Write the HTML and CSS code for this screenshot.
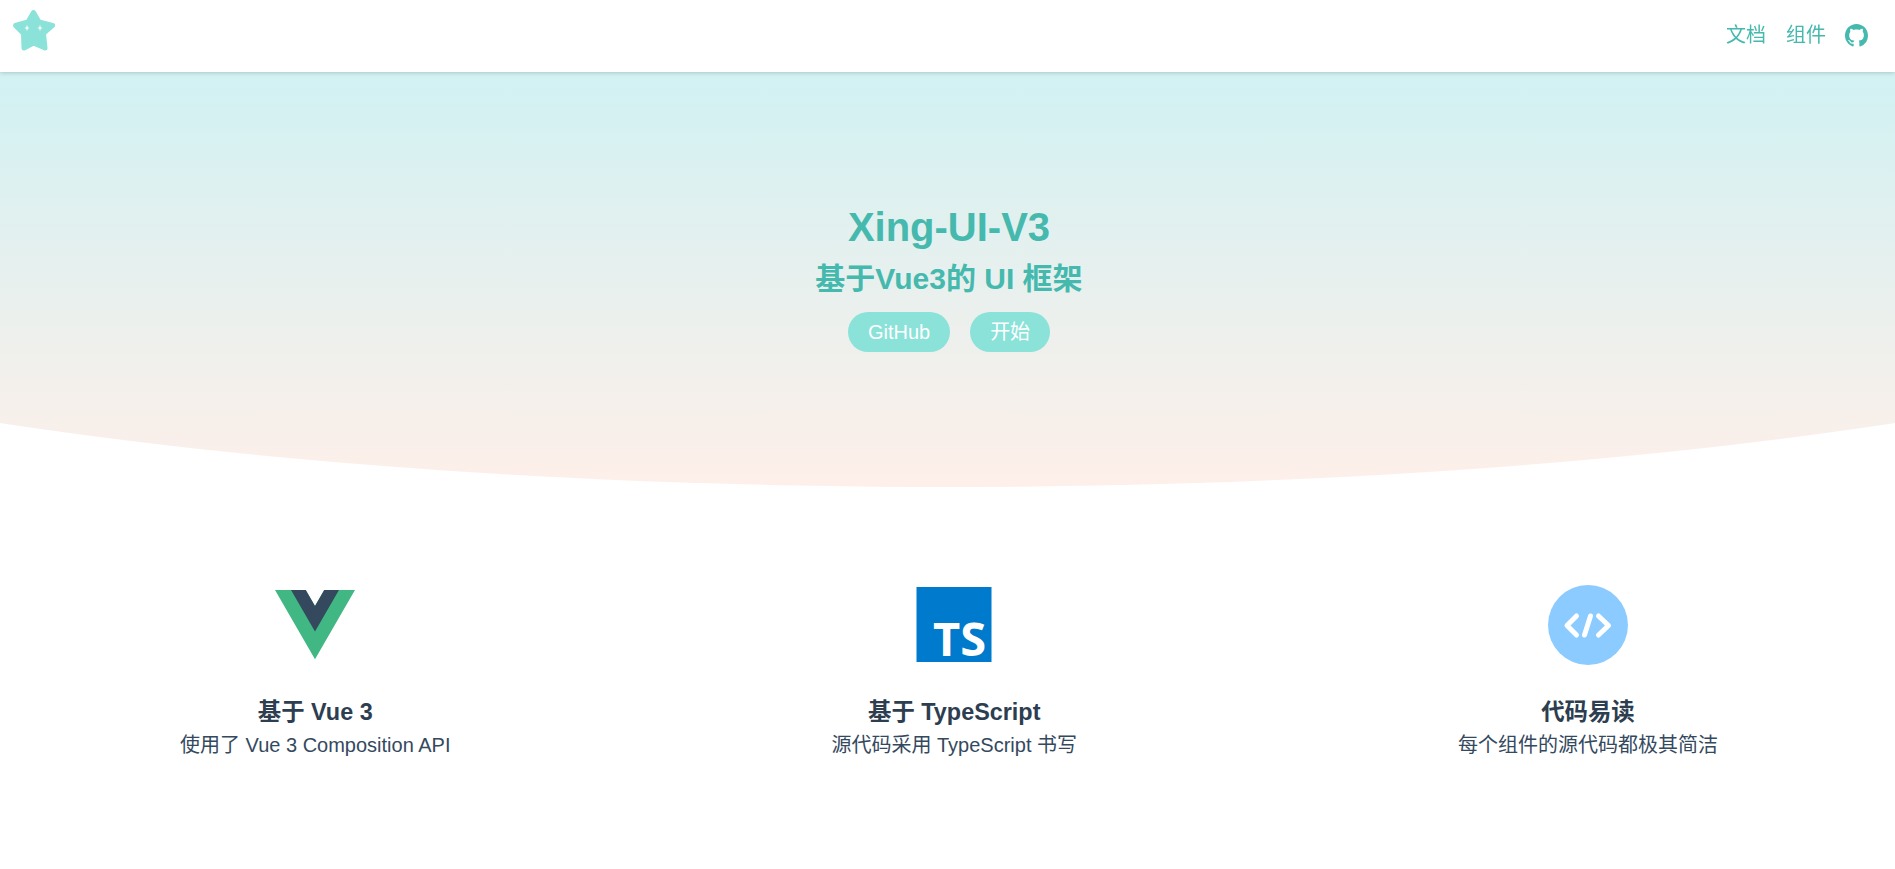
FILE: index.html
```html
<!DOCTYPE html>
<html lang="zh-CN">
<head>
<meta charset="utf-8">
<title>Xing-UI-V3</title>
<link rel="stylesheet" href="styles.css">
</head>
<body>
<header class="topnav">
  <a class="logo" href="#" aria-label="Xing UI">
    <svg width="51" height="51" viewBox="0 0 51 51">
      <path class="star" d="M24.5 6.5 L30 16 L43.5 19.5 L34.5 27.5 L36 42 L24.5 37 L15 42 L14.5 27.5 L6.5 19.5 L19 16 Z"/>
      <path class="spark" d="M18 18.5 L18.7 21.3 L20.6 22 L18.7 22.7 L18 25.5 L17.3 22.7 L15.4 22 L17.3 21.3 Z"/>
      <path class="spark" d="M31 18.5 L31.7 21.3 L33.6 22 L31.7 22.7 L31 25.5 L30.3 22.7 L28.4 22 L30.3 21.3 Z"/>
    </svg>
  </a>
  <nav class="menu">
    <a class="menu-link" href="#">文档</a>
    <a class="menu-link" href="#">组件</a>
    <a class="menu-icon" href="#" aria-label="GitHub">
      <svg width="23" height="23" viewBox="0 0 16 16"><path d="M8 0C3.58 0 0 3.58 0 8c0 3.54 2.29 6.53 5.47 7.59.4.07.55-.17.55-.38 0-.19-.01-.82-.01-1.49-2.01.37-2.53-.49-2.69-.94-.09-.23-.48-.94-.82-1.13-.28-.15-.68-.52-.01-.53.63-.01 1.08.58 1.23.82.72 1.21 1.87.87 2.33.66.07-.52.28-.87.51-1.07-1.78-.2-3.64-.89-3.64-3.95 0-.87.31-1.59.82-2.15-.08-.2-.36-1.02.08-2.12 0 0 .67-.21 2.2.82.64-.18 1.32-.27 2-.27.68 0 1.36.09 2 .27 1.53-1.04 2.2-.82 2.2-.82.44 1.1.16 1.92.08 2.12.51.56.82 1.27.82 2.15 0 3.07-1.87 3.75-3.65 3.95.29.25.54.73.54 1.48 0 1.07-.01 1.93-.01 2.2 0 .21.15.46.55.38A8.013 8.013 0 0016 8c0-4.42-3.58-8-8-8z"/></svg>
    </a>
  </nav>
</header>

<section class="hero">
  <h1 class="hero-title">Xing-UI-V3</h1>
  <h2 class="hero-sub">基于Vue3的 UI 框架</h2>
  <div class="hero-actions">
    <a class="pill" href="#">GitHub</a>
    <a class="pill" href="#">开始</a>
  </div>
</section>

<section class="features">
  <article class="feature">
    <svg class="feature-icon" width="80" height="80" viewBox="0 0 80 80">
      <g transform="translate(0 5) scale(.3056)">
        <path fill="#41b883" d="M161.096.001l-30.225 52.351L100.647.001H-.005l130.876 226.688L261.747.001z"/>
        <path fill="#34495e" d="M161.096.001l-30.225 52.351L100.647.001H52.346l78.525 136.01L209.398.001z"/>
      </g>
    </svg>
    <h3 class="feature-title">基于 Vue 3</h3>
    <p class="feature-desc">使用了 Vue 3 Composition API</p>
  </article>
  <article class="feature">
    <svg class="feature-icon ts-icon" width="80" height="90" viewBox="0 0 80 90">
      <rect x="2.5" y="2" width="75" height="75" fill="#007acc"/>
      <text class="ts-text" x="19" y="71">TS</text>
    </svg>
    <h3 class="feature-title">基于 TypeScript</h3>
    <p class="feature-desc">源代码采用 TypeScript 书写</p>
  </article>
  <article class="feature">
    <svg class="feature-icon" width="80" height="80" viewBox="0 0 80 80">
      <circle cx="40" cy="40" r="40" fill="#8ccbff"/>
      <path class="code-stroke" d="M28.5 31 L19 40.5 L28.5 50 M50.5 31 L60.5 40.5 L50.5 50 M42.5 31 L36.5 50"/>
    </svg>
    <h3 class="feature-title">代码易读</h3>
    <p class="feature-desc">每个组件的源代码都极其简洁</p>
  </article>
</section>
</body>
</html>
```

FILE: styles.css
```css
* { box-sizing: border-box; }

html, body {
  margin: 0;
  padding: 0;
  background: #fff;
}

body {
  font-family: "Liberation Sans", "Noto Sans CJK SC", sans-serif;
  font-size: 20px;
  color: #2c3e50;
}

a { text-decoration: none; color: inherit; }

.topnav {
  position: fixed;
  top: 0;
  left: 0;
  right: 0;
  z-index: 2;
  height: 72px;
  padding: 0 27px 0 9px;
  display: flex;
  align-items: flex-start;
  justify-content: space-between;
  background: #fff;
  box-shadow: 0 0 5px rgba(0, 0, 0, .25);
}

.logo { display: block; height: 51px; margin-top: 6px; }
.logo svg { display: block; }
.star { fill: #8ae2d9; stroke: #8ae2d9; stroke-width: 5; stroke-linejoin: round; }
.spark { fill: #fff; }

.menu {
  display: flex;
  align-items: center;
  gap: 20px;
  height: 70px;
  color: #45b9ad;
}

.menu-link { line-height: 28px; }
.menu-icon { display: block; height: 23px; margin-left: -1px; }
.menu-icon svg { display: block; fill: #45b9ad; }

.hero {
  height: 487px;
  padding: 203px 0 0 3px;
  text-align: center;
  color: #45b9ad;
  background: linear-gradient(180deg, #c9f2f5 0%, #feefe9 100%);
  clip-path: ellipse(80% 60% at 50% 40%);
}

.hero-title {
  margin: 0;
  font-size: 40px;
  line-height: 48px;
  font-weight: 700;
}

.hero-sub {
  margin: 10px 0 0;
  font-size: 30px;
  line-height: 36px;
  font-weight: 700;
}

.hero-actions {
  display: flex;
  justify-content: center;
  gap: 20px;
  margin-top: 15px;
}

.pill {
  padding: 0 20px;
  height: 40px;
  line-height: 40px;
  border-radius: 20px;
  background: #8ae2d9;
  color: #fff;
}

.features {
  display: flex;
  justify-content: space-between;
  padding: 98px 177px 0 180px;
}

.feature {
  display: flex;
  flex-direction: column;
  align-items: center;
  text-align: center;
}

.feature-icon { display: block; }
.ts-icon { margin-bottom: -10px; }

.feature-title {
  margin: 31px 0 0;
  font-size: 23.4px;
  line-height: 32px;
  font-weight: 700;
}

.feature-desc {
  margin: 1px 0 0;
  line-height: 32px;
  font-size: 20px;
  color: #34495e;
}

.ts-text {
  font-family: "Open Sans", sans-serif;
  font-weight: 700;
  font-size: 47px;
  fill: #fff;
}

.code-stroke {
  fill: none;
  stroke: #fff;
  stroke-width: 5;
  stroke-linecap: round;
  stroke-linejoin: round;
}
```
